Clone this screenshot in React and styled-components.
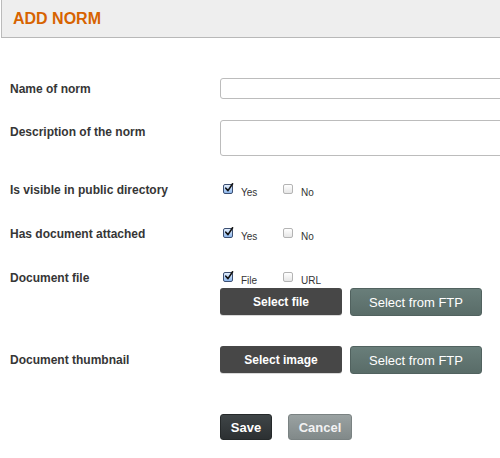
import React from "react";
import styled, { createGlobalStyle } from "styled-components";

const Global = createGlobalStyle`
  html, body { margin: 0; padding: 0; overflow: hidden; background: #fff; }
  body { font-family: "Liberation Sans", Arial, Helvetica, sans-serif; }
  * { box-sizing: border-box; }
`;

const Page = styled.div`
  width: 500px;
  height: 458px;
  overflow: hidden;
`;

const Header = styled.div`
  margin-left: 1px;
  height: 38px;
  background: #eeeeee;
  border-left: 1px solid #bbbbbb;
  border-bottom: 1px solid #b8b8b8;
  display: flex;
  align-items: center;
  padding-left: 11px;
`;

const Title = styled.h1`
  margin: 0;
  font-size: 16px;
  font-weight: bold;
  color: #d76300;
  line-height: 18px;
  padding-top: 1px;
`;

const Form = styled.form`
  display: flex;
  flex-direction: column;
`;

const Row = styled.div`
  display: flex;
  align-items: ${(p) => p.$align || "flex-start"};
  margin-top: ${(p) => p.$mt}px;
`;

const Label = styled.label`
  width: 220px;
  flex: none;
  padding-left: 10px;
  padding-top: ${(p) => p.$pt || 0}px;
  font-size: 12px;
  font-weight: bold;
  line-height: 14px;
  color: #363636;
`;

const Field = styled.div`
  display: flex;
  flex-direction: column;
`;

const TextInput = styled.input`
  flex: none;
  width: 300px;
  height: 21px;
  border: 1px solid #bcbcbc;
  border-radius: 3px;
  background: #fff;
  padding: 2px 6px;
  font: inherit;
  font-size: 12px;
  outline: none;
`;

const TextArea = styled.textarea`
  flex: none;
  width: 300px;
  height: 36px;
  border: 1px solid #bcbcbc;
  border-radius: 3px;
  background: #fff;
  padding: 4px 6px;
  font: inherit;
  font-size: 12px;
  resize: none;
  outline: none;
  display: block;
`;

const Options = styled.div`
  display: flex;
  padding-left: 3px;
  padding-top: 1px;
  height: 16px;
`;

const Option = styled.span`
  display: flex;
  align-items: flex-start;
  width: 60px;
`;

const Box = styled.span`
  width: 10px;
  height: 10px;
  flex: none;
  border-radius: 2px;
  display: flex;
  align-items: center;
  justify-content: center;
  border: 1px solid ${(p) => (p.$checked ? "#3c4f72" : "#b4b4b4")};
  background: ${(p) =>
    p.$checked
      ? "linear-gradient(#e3eefc, #8db7ec)"
      : "linear-gradient(#ffffff, #e6e6e6)"};
  position: relative;
`;

const OptText = styled.span`
  margin-left: 8px;
  margin-top: 3px;
  font-size: 10px;
  line-height: 12px;
  color: #333;
`;

const Buttons = styled.div`
  display: flex;
  gap: ${(p) => p.$gap || 8}px;
  margin-top: ${(p) => p.$mt || 0}px;
  align-items: flex-start;
`;

const DarkButton = styled.button`
  width: 122px;
  height: 27px;
  border: none;
  border-radius: 3px;
  background: #474747;
  color: #fff;
  font-family: inherit;
  font-weight: bold;
  font-size: 12px;
  padding: 0;
  box-shadow: 0 1px 0 rgba(0, 0, 0, 0.15);
`;

const FtpButton = styled.button`
  width: 132px;
  height: 28px;
  border: 1px solid #51625f;
  border-radius: 3px;
  background: linear-gradient(#697e7a, #596c68);
  color: #fff;
  font-family: inherit;
  font-size: 13px;
  padding: 0;
`;

const ActionButton = styled.button`
  width: ${(p) => p.$w}px;
  height: 26px;
  border: 1px solid ${(p) => (p.$primary ? "#25292a" : "#7a8282")};
  border-radius: 3px;
  background: ${(p) =>
    p.$primary
      ? "linear-gradient(#3f4547, #2c3032)"
      : "linear-gradient(#9aa2a2, #818989)"};
  color: ${(p) => (p.$primary ? "#fff" : "#f2f2f2")};
  font-family: inherit;
  font-weight: bold;
  font-size: 13px;
  padding: 0;
`;

function Check({ checked, label }) {
  return (
    <Option>
      <Box $checked={checked}>
        {checked && (
          <svg width="10" height="10" viewBox="0 0 10 10" style={{ position: "absolute", left: 0, top: -2 }}>
            <path d="M1.8 5.2 L4 7.6 L8.6 0.8" fill="none" stroke="#111" strokeWidth="1.6" strokeLinecap="round" strokeLinejoin="round" />
          </svg>
        )}
      </Box>
      <OptText>{label}</OptText>
    </Option>
  );
}

export default function App() {
  return (
    <Page>
      <Global />
      <Header>
        <Title>ADD NORM</Title>
      </Header>
      <Form onSubmit={(e) => e.preventDefault()}>
        <Row $mt={40} $align="center">
          <Label>Name of norm</Label>
          <TextInput type="text" />
        </Row>
        <Row $mt={21}>
          <Label $pt={5}>Description of the norm</Label>
          <TextArea />
        </Row>
        <Row $mt={27}>
          <Label>Is visible in public directory</Label>
          <Options>
            <Check checked label="Yes" />
            <Check label="No" />
          </Options>
        </Row>
        <Row $mt={28}>
          <Label>Has document attached</Label>
          <Options>
            <Check checked label="Yes" />
            <Check label="No" />
          </Options>
        </Row>
        <Row $mt={28}>
          <Label>Document file</Label>
          <Field>
            <Options>
              <Check checked label="File" />
              <Check label="URL" />
            </Options>
            <Buttons $mt={1}>
              <DarkButton type="button">Select file</DarkButton>
              <FtpButton type="button">Select from FTP</FtpButton>
            </Buttons>
          </Field>
        </Row>
        <Row $mt={30} $align="center">
          <Label>Document thumbnail</Label>
          <Buttons>
            <DarkButton type="button">Select image</DarkButton>
            <FtpButton type="button">Select from FTP</FtpButton>
          </Buttons>
        </Row>
        <Row $mt={40}>
          <Label as="span" />
          <Buttons $gap={16}>
            <ActionButton type="submit" $primary $w={52}>Save</ActionButton>
            <ActionButton type="button" $w={64}>Cancel</ActionButton>
          </Buttons>
        </Row>
      </Form>
    </Page>
  );
}
